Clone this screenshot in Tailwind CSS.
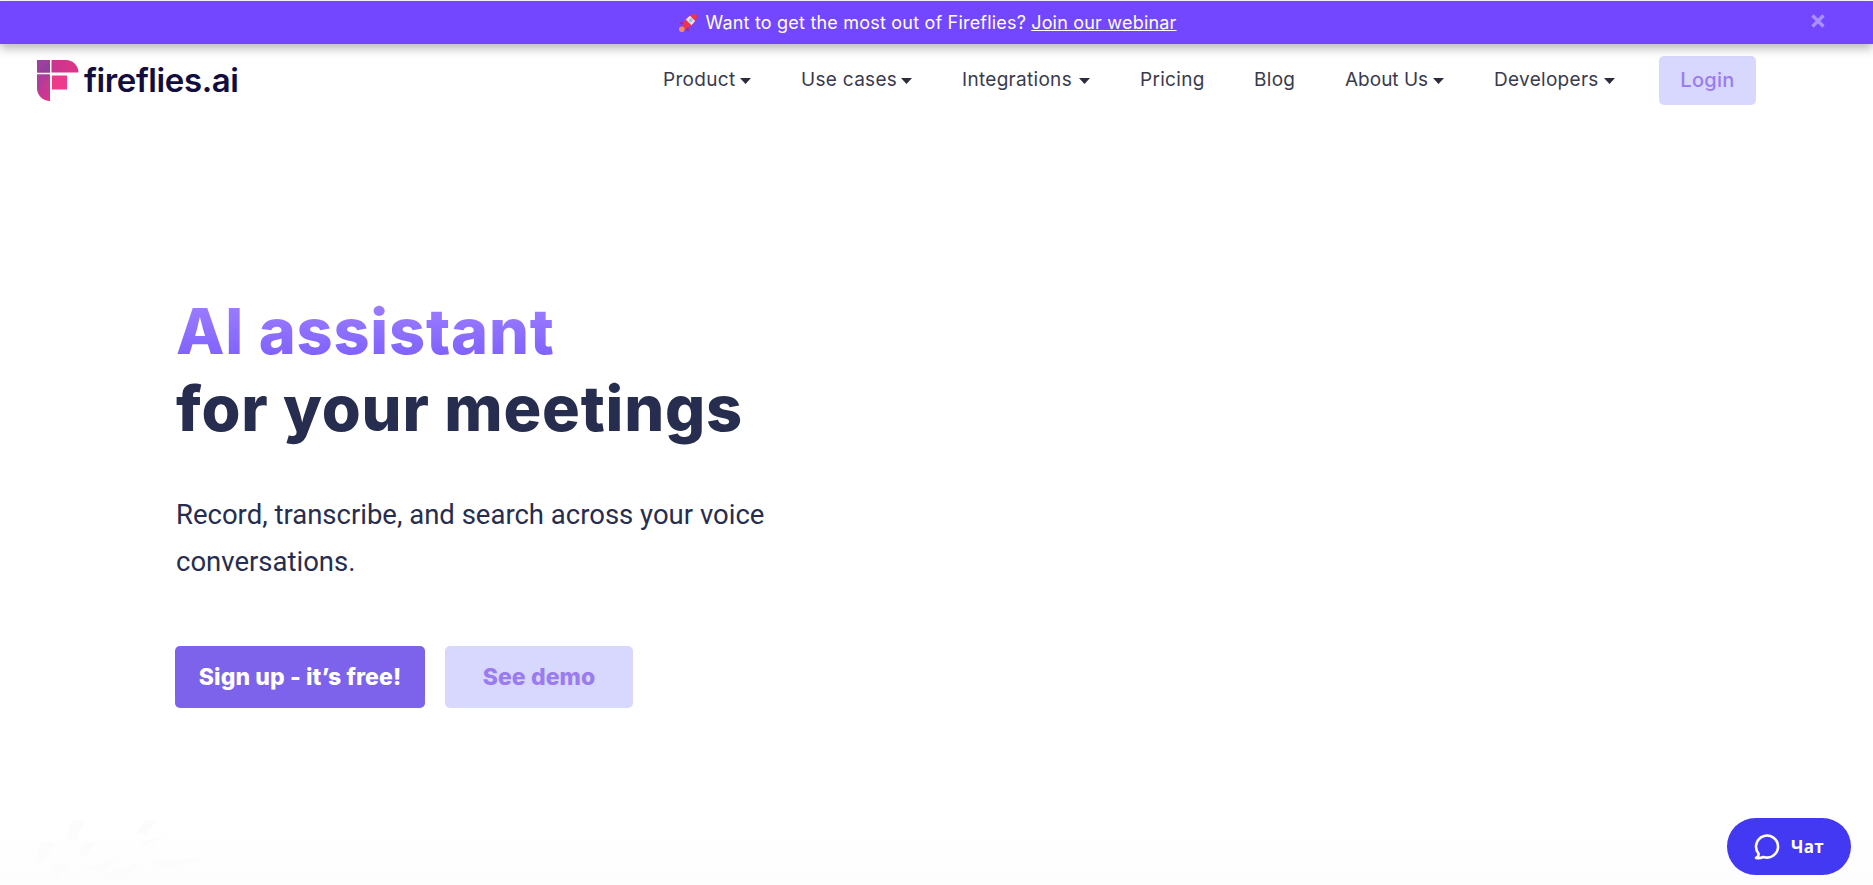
<!DOCTYPE html>
<html lang="en">
<head>
  <meta charset="UTF-8" />
  <title>Fireflies.ai</title>
  <script src="https://cdn.jsdelivr.net/npm/@tailwindcss/browser@4"></script>
</head>
<body class="bg-white font-['Inter',sans-serif] h-[885px] overflow-hidden relative">
  <!-- Banner -->
  <div class="relative z-10 mt-px h-[43px] pr-[18px] bg-[#7346ff] shadow-[0_4px_10px_rgba(0,0,0,0.3)] flex items-center justify-center text-white text-[18px] tracking-[0.2px]">
    <svg class="w-[20px] h-[20px] mr-[7px]" viewBox="0 0 20 20">
      <g transform="rotate(45 11 9)">
        <path d="M7.500 13 4.500 16.500 7.800 16ZM14.500 13 17.500 16.500 14.200 16Z" fill="#c4213f"/>
        <ellipse cx="11" cy="8" rx="4.200" ry="9.500" fill="#ee3350"/>
        <path d="M7.300 4H14.700L15 9.500H7Z" fill="#f7e4e8"/>
        <circle cx="11" cy="6.500" r="2" fill="#8ecbe8"/>
      </g>
      <circle cx="3.800" cy="16.200" r="2.800" fill="#f58a5c"/>
    </svg>
    <span>Want to get the most out of Fireflies?</span>
    <a href="#" class="ml-[5px] underline">Join our webinar</a>
    <span class="absolute right-[47px] top-[12px]">
      <svg class="w-[16px] h-[16px] block" viewBox="0 0 16 16"><path d="M2.500 2.500 13.500 13.500M13.500 2.500 2.500 13.500" stroke="#ab90ff" stroke-width="3.200"/></svg>
    </span>
  </div>

  <!-- Nav -->
  <header class="h-[73px] flex items-center pl-[37px] pr-[117px] justify-between">
    <a href="#" class="flex items-center gap-[5px]">
      <svg class="w-[42px] h-[41px]" viewBox="0 0 42 41">
        <defs>
          <linearGradient id="logoA" x1="0" y1="0" x2="1" y2="1"><stop offset="0" stop-color="#a43f9d"/><stop offset="1" stop-color="#e0338a"/></linearGradient>
          <linearGradient id="logoB" x1="0" y1="0" x2="1" y2="0"><stop offset="0" stop-color="#c9358f"/><stop offset="1" stop-color="#df3589"/></linearGradient>
        </defs>
        <path d="M0 0H13V12.500H0Z" fill="#a0409e"/>
        <path d="M0 12.500 13 0V12.500Z" fill="#933f9c"/>
        <path d="M14.500 0H29A12.500 12.500 0 0 1 41.500 12.500H14.500Z" fill="url(#logoB)"/>
        <path d="M0 14.500H13V41A13 13 0 0 1 0 28Z" fill="url(#logoA)"/>
        <path d="M0 14.500H13L0 28Z" fill="#b03c9b"/>
        <path d="M15 15.500H30V29.500H15Z" fill="#ee3a8a"/>
      </svg>
      <span class="font-semibold text-[33px] tracking-[-0.4px] text-[#120d3f] leading-none">fireflies.ai</span>
    </a>
    <nav class="flex items-center gap-[50px] text-[19px] tracking-[0.3px] text-[#3a3a4d] whitespace-nowrap">
      <a href="#" class="flex items-center justify-between w-[88px]">Product<svg class="w-[11px] h-[6px]" viewBox="0 0 11 6"><path d="M0 0H11L5.500 6Z" fill="#2c2c3d"/></svg></a>
      <a href="#" class="flex items-center justify-between w-[111px]">Use cases<svg class="w-[11px] h-[6px]" viewBox="0 0 11 6"><path d="M0 0H11L5.500 6Z" fill="#2c2c3d"/></svg></a>
      <a href="#" class="flex items-center justify-between w-[128px]">Integrations<svg class="w-[11px] h-[6px]" viewBox="0 0 11 6"><path d="M0 0H11L5.500 6Z" fill="#2c2c3d"/></svg></a>
      <a href="#" class="w-[64px]">Pricing</a>
      <a href="#" class="w-[41px]">Blog</a>
      <a href="#" class="flex items-center justify-between w-[99px] tracking-[0px]">About Us<svg class="w-[11px] h-[6px]" viewBox="0 0 11 6"><path d="M0 0H11L5.500 6Z" fill="#2c2c3d"/></svg></a>
      <a href="#" class="flex items-center justify-between w-[121px]">Developers<svg class="w-[11px] h-[6px]" viewBox="0 0 11 6"><path d="M0 0H11L5.500 6Z" fill="#2c2c3d"/></svg></a>
      <a href="#" class="ml-[-6px] w-[97px] h-[49px] pb-[2px] rounded-[5px] bg-[#d8d8ff] text-[#9a7bf0] text-[20px] font-medium flex items-center justify-center">Login</a>
    </nav>
  </header>

  <!-- Hero -->
  <main class="pl-[176px] pt-[176px]">
    <h1 class="text-[63px] leading-[77px] font-extrabold tracking-[0.8px] text-[#272d4f]">
      <span class="block w-fit bg-linear-to-b from-[#a283ff] to-[#7a59ff] bg-clip-text text-transparent">AI assistant</span>
      <span class="block">for your meetings</span>
    </h1>
    <p class="mt-[44px] w-[620px] font-['Roboto',sans-serif] text-[27.5px] leading-[47px] text-[#272d4f]">Record, transcribe, and search across your voice conversations.</p>
    <div class="mt-[61px] ml-[-1px] flex gap-[20px]">
      <a href="#" class="w-[250px] h-[62px] rounded-[5px] bg-[#7d63ec] text-white text-[23px] font-extrabold tracking-[0.1px] flex items-center justify-center">Sign up - it’s free!</a>
      <a href="#" class="w-[188px] h-[62px] rounded-[5px] bg-[#d8d8ff] text-[#9a7bf0] text-[23px] font-extrabold tracking-[0.1px] flex items-center justify-center">See demo</a>
    </div>
  </main>

  <!-- Faint artwork at the fold -->
  <div class="absolute left-0 right-0 bottom-0 h-[60px] bg-linear-to-b from-white to-[#fdfdfd]"></div>
  <svg class="absolute left-0 top-[780px] w-[240px] h-[105px]" viewBox="0 0 240 105">
    <path d="M72 40H85L76 60H66ZM42 62H55L44 82H33ZM85 62H96L84 78H76ZM57 84H70L58 98H48ZM145 40H157L146 55H135Z" fill="#fcfcfc"/>
    <path d="M85 88 120 77 100 92ZM95 98 140 82 125 100ZM140 62 170 55 145 66ZM150 82 210 77 170 88Z" fill="#fcfcfc"/>
  </svg>

  <!-- Chat button -->
  <button class="absolute left-[1727px] top-[818px] w-[124px] h-[57px] rounded-full bg-[#4439f2] text-white flex items-center justify-center gap-[11px] font-['Open_Sans',sans-serif] font-bold text-[17px] tracking-[0.3px]">
    <svg class="w-[26px] h-[26px]" viewBox="0 0 26 26"><path d="M2 24C4 23 4.800 21.500 4.500 19.500A11 11 0 1 1 9.500 23C7 24 4.500 24.300 2 24Z" fill="none" stroke="white" stroke-width="2.600" stroke-linejoin="round"/></svg>
    <span>Чат</span>
  </button>
</body>
</html>
